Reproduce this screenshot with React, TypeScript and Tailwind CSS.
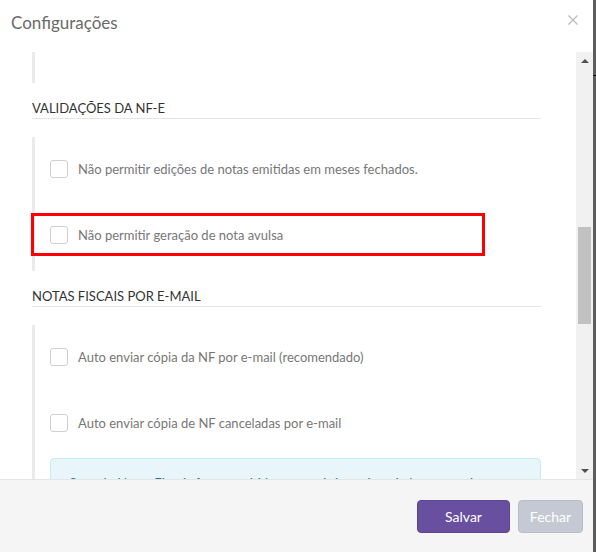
function Checkbox() {
  return <span className="w-[18px] h-[18px] shrink-0 rounded-[3px] border border-[#cfcfcf] bg-white" />
}

function Option({ label }: { label: string }) {
  return (
    <label className="flex items-center gap-[10px] h-[18px] text-[13px] text-[#777] leading-[18px]">
      <Checkbox />
      <span>{label}</span>
    </label>
  )
}

function Heading({ children }: { children: string }) {
  return (
    <h3 className="ml-[32px] mr-[35px] mt-[15px] h-[21px] leading-[20px] border-b border-[#e5e5e5] text-[13px] text-[#333] uppercase">
      {children}
    </h3>
  )
}

export default function App() {
  return (
    <div className="w-[596px] h-[552px] flex bg-white font-['Lato','Open_Sans',sans-serif] overflow-hidden">
      <div className="w-[593px] flex flex-col">
        <header className="h-[52px] flex justify-between items-start">
          <h2 className="pl-[11px] pt-[11px] text-[17px] leading-[23px] text-[#6a6a6a]">Configurações</h2>
          <button className="mt-[15px] mr-[15px] w-[10px] h-[10px]">
            <svg viewBox="0 0 10 10" className="w-[10px] h-[10px]">
              <path d="M0.5 0.5L9.5 9.5M9.5 0.5L0.5 9.5" stroke="#bdbdbd" strokeWidth="1.3" />
            </svg>
          </button>
        </header>

        <div className="h-[427px] flex">
          <div className="flex-1 overflow-hidden">
            <div className="ml-[32px] w-[3px] h-[31px] bg-[#ebebeb]" />

            <Heading>Validações da NF-e</Heading>
            <div className="relative ml-[32px] mt-[18px] border-l-[3px] border-[#ebebeb] pl-[15px] pt-[23px] pb-[27px] flex flex-col gap-[48px]">
              <Option label="Não permitir edições de notas emitidas em meses fechados." />
              <Option label="Não permitir geração de nota avulsa" />
              <div className="absolute left-[-4px] top-[76px] w-[454px] h-[43px] border-[3px] border-[#ff0000] pointer-events-none" />
            </div>

            <Heading>Notas fiscais por e-mail</Heading>
            <div className="ml-[32px] mr-[35px] mt-[18px] border-l-[3px] border-[#ebebeb] pl-[15px] pt-[23px] pb-[20px] flex flex-col">
              <Option label="Auto enviar cópia da NF por e-mail (recomendado)" />
              <div className="mt-[48px]">
                <Option label="Auto enviar cópia de NF canceladas por e-mail" />
              </div>
              <div className="mt-[26px] rounded-[4px] border border-[#c4edf3] bg-[#e8f6fb] px-[17px] pt-[14px] pb-[14px] text-[13px] leading-[20px] text-[#31708f]">
                Quando Notas Fiscais forem emitidas, uma cópia será enviada automaticamente ao e-mail do cliente cadastrado.
              </div>
            </div>
          </div>

          <div className="w-[17px] bg-[#f1f1f1] flex flex-col">
            <div className="h-[17px] flex items-center justify-center">
              <svg viewBox="0 0 8 4" className="w-[8px] h-[4px]">
                <path d="M0 4L4 0L8 4Z" fill="#505050" />
              </svg>
            </div>
            <div className="mt-[158px] mx-[2px] h-[97px] bg-[#c1c1c1]" />
            <div className="flex-1" />
            <div className="h-[17px] flex items-center justify-center">
              <svg viewBox="0 0 8 4" className="w-[8px] h-[4px]">
                <path d="M0 0L8 0L4 4Z" fill="#505050" />
              </svg>
            </div>
          </div>
        </div>

        <footer className="flex-1 bg-[#f5f5f5] border-t border-[#e5e5e5] flex justify-end items-start gap-[8px] pt-[20px] pr-[10px]">
          <button className="w-[93px] h-[33px] rounded-[4px] bg-[#684f9f] border border-[#5e4692] text-white text-[14px]">
            Salvar
          </button>
          <button className="w-[65px] h-[33px] rounded-[4px] bg-[#c5c9d3] border border-[#b8bdc9] text-white text-[14px]">
            Fechar
          </button>
        </footer>
      </div>

      <div className="w-[3px] bg-[#5c5c5c] flex flex-col">
        <div className="mt-[75px] h-[1px] bg-[#111]" />
      </div>
    </div>
  )
}
